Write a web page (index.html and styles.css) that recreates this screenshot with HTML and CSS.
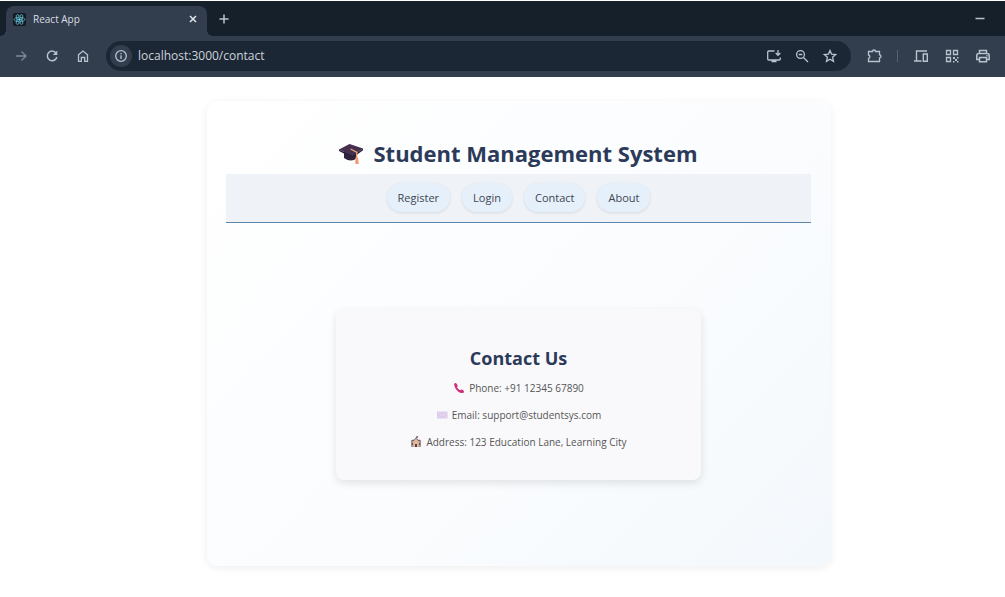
FILE: index.html
```html
<!DOCTYPE html>
<html lang="en">
<head>
<meta charset="utf-8">
<title>React App</title>
<link rel="stylesheet" href="styles.css">
</head>
<body>
<header class="browser">
  <div class="tabstrip">
    <div class="tab">
      <svg class="favicon" viewBox="0 0 24 24" aria-hidden="true">
        <rect width="24" height="24" rx="4" fill="#16191e"/>
        <g fill="none" stroke="#58b9cf" stroke-width="1.5">
          <ellipse cx="12" cy="12" rx="10" ry="4"/>
          <ellipse cx="12" cy="12" rx="10" ry="4" transform="rotate(60 12 12)"/>
          <ellipse cx="12" cy="12" rx="10" ry="4" transform="rotate(120 12 12)"/>
        </g>
        <circle cx="12" cy="12" r="2.2" fill="#7be0f3"/>
      </svg>
      <span class="tab-title">React App</span>
      <button class="tab-close" aria-label="Close tab"><svg class="glyph-sm" viewBox="0 0 10 10"><path d="M2 2l6 6M8 2l-6 6" stroke-width="1.5"/></svg></button>
    </div>
    <button class="new-tab" aria-label="New tab"><svg class="glyph" viewBox="0 0 14 14"><path d="M7 2.500v9M2.500 7h9" stroke-width="1.5"/></svg></button>
    <button class="minimize" aria-label="Minimize"><svg class="glyph" viewBox="0 0 14 14"><path d="M2.500 6.500h9" stroke-width="1.5"/></svg></button>
  </div>
  <div class="toolbar">
    <div class="group">
      <button class="tool dim" aria-label="Forward"><svg class="glyph" viewBox="0 0 14 14"><path d="M2 7h10M7.500 2.500L12 7l-4.500 4.500"/></svg></button>
      <button class="tool" aria-label="Reload"><svg class="glyph" viewBox="0 0 14 14"><path d="M11.300 4.500A4.800 4.800 0 1 0 11.800 8" stroke-width="1.500"/><path class="solid" d="M12.300 1.500v4.600H7.800z"/></svg></button>
      <button class="tool" aria-label="Home"><svg class="glyph" viewBox="0 0 14 14"><path d="M2.500 5.700L7 2l4.500 3.700v6.600H8.700V8.500H5.300v3.800H2.500z"/></svg></button>
    </div>
    <div class="omnibox">
      <button class="site-info" aria-label="Site information"><svg class="glyph" viewBox="0 0 14 14"><circle cx="7" cy="7" r="5.300"/><path d="M7 6.300v3.600M7 4v1.300"/></svg></button>
      <input class="address" type="text" aria-label="Address" value="localhost:3000/contact">
      <div class="actions">
        <button class="tool" aria-label="Install app"><svg class="glyph-lg" viewBox="0 0 16 16"><path d="M8.500 3H2.700q-1 0-1 1v7q0 1 1 1h10.600q1 0 1-1V9.500M5.500 13.500h5M12 2v5M9.700 5L12 7.300 14.300 5"/></svg></button>
        <button class="tool" aria-label="Zoom"><svg class="glyph" viewBox="0 0 14 14"><circle cx="5.500" cy="5.500" r="3.900"/><path d="M8.500 8.500l4.500 4.500M3.700 5.500h3.600"/></svg></button>
        <button class="tool" aria-label="Bookmark"><svg class="glyph" viewBox="0 0 14 14"><path d="M7 1.500l1.600 3.700 4 .4-3 2.700.9 4L7 10.200l-3.500 2.100.9-4-3-2.700 4-.4z"/></svg></button>
      </div>
    </div>
    <button class="tool" aria-label="Extensions"><svg class="glyph-lg" viewBox="0 0 16 16"><path d="M2.500 3.500h4a1.500 1.500 0 0 1 3 0h4v3.300a1.500 1.500 0 0 1 0 3v3.700h-11v-3a1.800 1.800 0 0 0 0-3.500z"/></svg></button>
    <span class="divider"></span>
    <div class="group">
      <button class="tool" aria-label="Devices"><svg class="glyph-lg" viewBox="0 0 16 16"><path d="M14 3H3.500v9.500M1 13h7.500M10.300 6h4v7.300h-4z" stroke-width="1.400"/></svg></button>
      <button class="tool" aria-label="QR code"><svg class="glyph" viewBox="0 0 14 14"><path d="M1.500 1.500h4v4h-4zM8.500 1.500h4v4h-4zM1.500 8.500h4v4h-4z"/><path class="solid" d="M8 8h2v2H8zM12 8h1.500v1.500H12zM10 10h2v2h-2zM8 12h1.500v1.500H8zM12 12h1.500v1.500H12z"/></svg></button>
      <button class="tool" aria-label="Print"><svg class="glyph-lg" viewBox="0 0 16 16"><path d="M4.500 5.500v-3h7v3M4.500 11.500H1.800V7.500q0-2 2-2h8.400q2 0 2 2v4h-2.700M4.500 9.500h7v4.200h-7z" stroke-width="1.500"/><circle class="solid" cx="12" cy="7.700" r=".8"/></svg></button>
    </div>
  </div>
</header>
<main class="page">
  <div class="card">
    <h1 class="title">
      <svg class="cap" viewBox="0 0 24 24" aria-hidden="true">
        <path d="M5 9v8q7 5 13 0V9z" fill="#30233f"/>
        <path d="M0 8.500L10.500 3 24 7.500 13.500 15z" fill="#45304f"/>
        <path d="M0 8.500L13.500 15 24 7.500v1.700L13.500 17 0 10z" fill="#2a2038"/>
        <path d="M11.500 8l6.200 3.200V18" fill="none" stroke="#e9a579" stroke-width="1.300"/>
        <path d="M16.400 16.500h2.700l.7 6.500h-3.500z" fill="#ee9b70"/>
      </svg>
      <span>Student Management System</span>
    </h1>
    <nav class="nav">
      <a class="pill" href="#register">Register</a>
      <a class="pill" href="#login">Login</a>
      <a class="pill" href="#contact">Contact</a>
      <a class="pill" href="#about">About</a>
    </nav>
    <div class="content">
      <section class="panel">
        <h2 class="panel-title">Contact Us</h2>
        <p class="line"><svg class="emoji" viewBox="0 0 12 12" aria-hidden="true"><path d="M1 2Q2.500 0 4 2.300T3.800 5Q5 7.300 7.200 8.300 8.500 7 10 8t.8 2.500Q8.500 12 5.300 9.700T1 2z" fill="#cf2f7d"/></svg>Phone: +91 12345 67890</p>
        <p class="line"><svg class="emoji" viewBox="0 0 12 12" aria-hidden="true"><path d="M1 2.500h10.500v7H1z" fill="#dccbea"/><path d="M1 2.500l5.500 4 5-4M1 9.500l4-4M11.500 9.500l-4-4" fill="none" stroke="#eadff3" stroke-width=".7"/></svg>Email: support@studentsys.com</p>
        <p class="line"><svg class="emoji" viewBox="0 0 12 12" aria-hidden="true"><path d="M1 5.500h10V11H1z" fill="#ae9a96"/><path d="M.5 5.500L2 3.800h8l1.500 1.700z" fill="#70646b"/><path d="M3.300 5L6 2.500 8.700 5v6H3.300z" fill="#e4b897"/><path d="M2.800 5.300L6 2.200l3.200 3.100" fill="none" stroke="#725c61" stroke-width=".9"/><path d="M6 2.500V.5h2v1H6" fill="#6e5a61" stroke="#6e5a61" stroke-width=".4"/><path d="M5 8h2v3H5zM1.700 7h1v2h-1zM9.300 7h1v2h-1z" fill="#534149"/></svg>Address: 123 Education Lane, Learning City</p>
      </section>
    </div>
  </div>
</main>
</body>
</html>
```
FILE: styles.css
```css
* { box-sizing: border-box; }
body {
  margin: 0;
  background: #fff;
  color: #555;
  font-family: "Segoe UI", "Open Sans", "Noto Sans", sans-serif;
}
button {
  display: flex;
  align-items: center;
  justify-content: center;
  flex: none;
  padding: 0;
  border: 0;
  background: none;
  color: inherit;
}
svg { display: block; flex: none; }
.glyph, .glyph-sm, .glyph-lg {
  fill: none;
  stroke: currentColor;
  stroke-width: 1.3;
}
.glyph { width: 14px; height: 14px; }
.glyph-sm { width: 10px; height: 10px; }
.glyph-lg { width: 16px; height: 16px; }
.solid { fill: currentColor; stroke: none; }

.browser {
  border-top: 1px solid #fff;
  background: #323d4d;
  color: #b9c3d0;
}
.tabstrip {
  display: flex;
  align-items: center;
  height: 35px;
  padding: 5px 18px 0 6px;
  background: #15202b;
}
.tab {
  position: relative;
  display: flex;
  align-items: center;
  gap: 7px;
  width: 201px;
  height: 30px;
  padding: 0 7px 4px;
  border-radius: 8px 8px 0 0;
  background: #323d4d;
}
.tab::before, .tab::after {
  content: "";
  position: absolute;
  bottom: 0;
  width: 6px;
  height: 6px;
}
.tab::before {
  right: 100%;
  background: radial-gradient(circle at 0 0, #15202b 6px, #323d4d 6px);
}
.tab::after {
  left: 100%;
  background: radial-gradient(circle at 100% 0, #15202b 6px, #323d4d 6px);
}
.favicon { width: 13px; height: 13px; }
.tab-title { flex: 1; font-size: 10px; line-height: 14px; color: #d8dee6; }
.tab-close { width: 14px; height: 14px; color: #e1e6ec; }
.new-tab { width: 20px; height: 20px; margin: 0 0 4px 7px; }
.minimize { margin: 0 0 4px auto; }
.toolbar {
  display: flex;
  align-items: center;
  gap: 11px;
  height: 41px;
  padding: 0 10px 2px 9px;
}
.group { display: flex; gap: 7px; }
.tool { width: 24px; height: 24px; }
.dim { color: #7e8997; }
.omnibox {
  display: flex;
  align-items: center;
  flex: 1;
  height: 30px;
  padding: 0 9px 0 4px;
  border-radius: 15px;
  background: #1c2735;
}
.site-info {
  width: 22px;
  height: 22px;
  border-radius: 50%;
  background: #323d4d;
}
.address {
  flex: 1;
  min-width: 0;
  padding: 0 0 0 6px;
  border: 0;
  outline: 0;
  background: none;
  color: #ccd3dc;
  font: 12px/18px "Segoe UI", "Open Sans", "Noto Sans", sans-serif;
}
.actions { display: flex; gap: 4px; }
.divider { width: 1px; height: 12px; background: #566171; }

.page { padding: 24px 0 24px 33px; }
.card {
  display: flex;
  flex-direction: column;
  width: 624px;
  max-width: 100%;
  min-height: 465px;
  margin: 0 auto;
  padding: 36px 20px 0 19px;
  border-radius: 12px;
  background: linear-gradient(135deg, #fff, #fafcfe 60%, #f3f8fc);
  box-shadow: 0 2px 8px rgba(0, 0, 0, 0.07);
}
.title {
  display: flex;
  align-items: center;
  justify-content: center;
  gap: 10px;
  margin: 0 0 5px;
  color: #2c3a5a;
  font-size: 22px;
  font-weight: 700;
  line-height: 32px;
}
.cap { width: 24px; height: 24px; }
.nav {
  display: flex;
  justify-content: center;
  gap: 12px;
  padding: 9px 10px 10px;
  border-bottom: 1px solid #5b86aa;
  background: #eff3f8;
}
.pill {
  padding: 6px 11px 5px;
  border-radius: 15px;
  background: #e5f0fb;
  box-shadow: 0 1px 3px rgba(0, 0, 0, 0.1);
  color: #3f4650;
  font-size: 11px;
  line-height: 18px;
  text-decoration: none;
}
.content {
  display: grid;
  flex: 1;
  place-items: center;
}
.panel {
  width: 365px;
  max-width: 100%;
  padding: 35px 20px 30px;
  border-radius: 8px;
  background: #f9f9fb;
  box-shadow: 0 3px 8px rgba(0, 0, 0, 0.11);
  text-align: center;
}
.panel-title {
  margin: 0 0 8px;
  color: #2c3a5a;
  font-size: 18px;
  line-height: 28px;
}
.line {
  display: flex;
  align-items: center;
  justify-content: center;
  gap: 4px;
  margin: 0 0 11px;
  font-size: 10px;
  line-height: 16px;
}
.line:last-child { margin-bottom: 0; }
.emoji { width: 12px; height: 12px; }
```
